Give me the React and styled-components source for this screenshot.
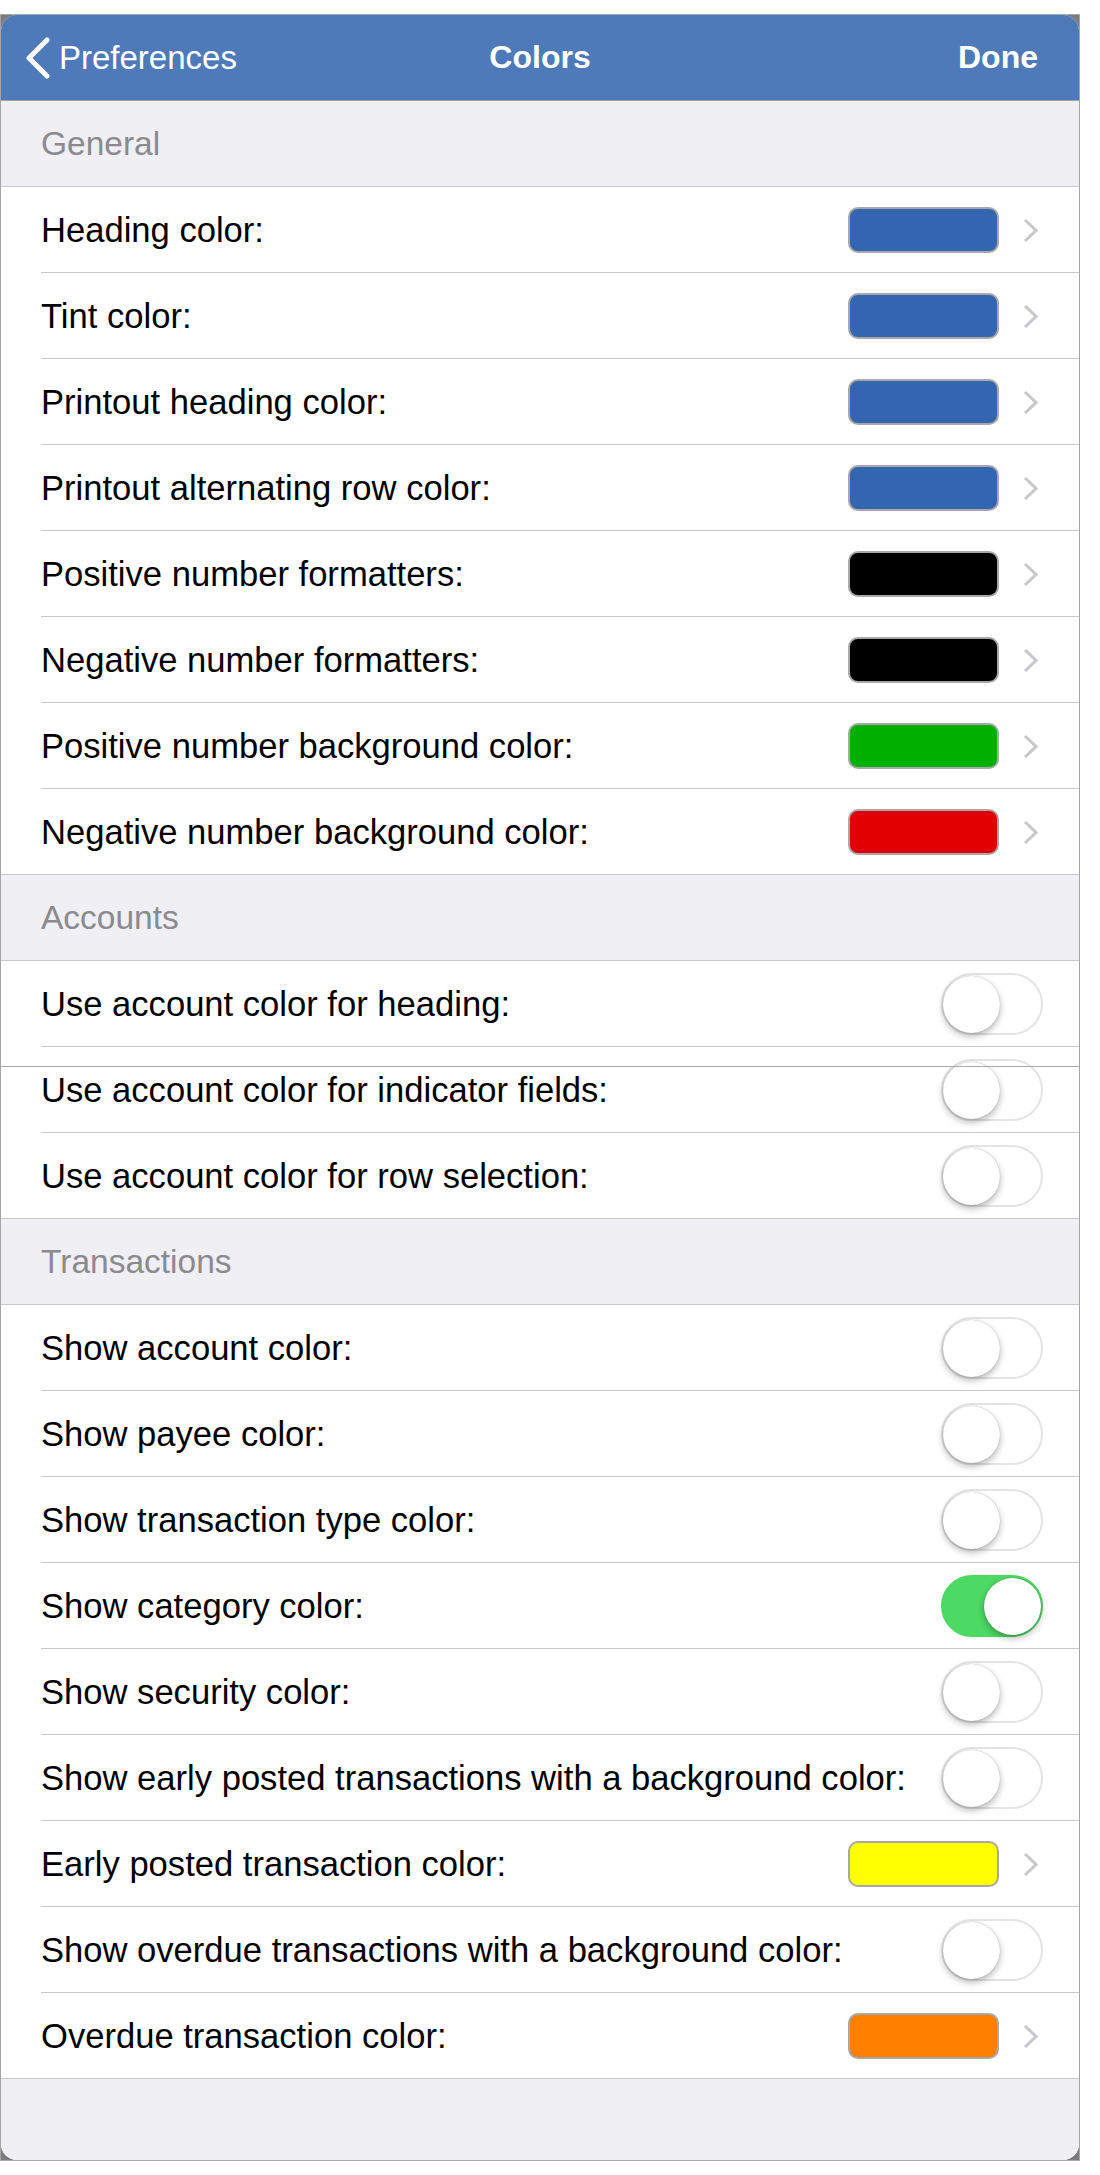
import styled, { createGlobalStyle } from "styled-components";

const GlobalStyle = createGlobalStyle`
  body {
    margin: 0;
    background: #ffffff;
    font-family: "Liberation Sans", Arial, sans-serif;
    -webkit-font-smoothing: antialiased;
  }
`;

const Page = styled.div`
  width: 1100px;
  padding-top: 14px;
`;

// the grey behind the rounded corners is part of the original capture
const Frame = styled.div`
  width: 1078px;
  border: 1px solid #a6a6a6;
  background: #7c7c7c;
`;

const Sheet = styled.div`
  background: #ffffff;
  border-radius: 16px;
  overflow: hidden;
`;

const NavBar = styled.header`
  display: grid;
  grid-template-columns: 1fr auto 1fr;
  align-items: center;
  height: 86px;
  box-sizing: border-box;
  background: #4e7ab9;
  border-bottom: 1px solid #a3a3a6;
  color: #ffffff;
  font-size: 33px;
`;

const BackButton = styled.div`
  display: flex;
  align-items: center;
  gap: 8px;
  padding-left: 24px;
`;

const Title = styled.div`
  font-weight: 700;
  font-size: 32px;
`;

const DoneButton = styled.div`
  justify-self: end;
  padding-right: 41px;
  font-weight: 700;
  font-size: 32px;
`;

const SectionHeader = styled.div`
  display: flex;
  align-items: center;
  height: 86px;
  box-sizing: border-box;
  padding-left: 40px;
  background: #efeff4;
  border-bottom: 1px solid #c8c7cc;
  color: #8a8a8f;
  font-size: 33.5px;
`;

const Row = styled.div`
  position: relative;
  display: flex;
  align-items: center;
  height: 86px;
  box-sizing: border-box;
  padding: 0 36px 0 40px;
  background: #ffffff;
  font-size: 34.6px;
  color: #000000;

  &::after {
    content: "";
    position: absolute;
    left: ${(p) => (p.$last ? "0" : "40px")};
    right: 0;
    bottom: 0;
    height: 1px;
    background: #c8c7cc;
  }

  ${(p) =>
    p.$glitch &&
    `
    &::before {
      content: "";
      position: absolute;
      left: 0;
      right: 0;
      top: 19px;
      height: 1px;
      background: #a9a9ac;
      z-index: 2;
    }
  `}
`;

const Label = styled.span`
  flex: 1;
  white-space: nowrap;
`;

const Swatch = styled.div`
  width: 151px;
  height: 46px;
  box-sizing: border-box;
  border: 2px solid #a8a8a8;
  border-radius: 10px;
  background: ${(p) => p.$color};
`;

const Chevron = styled.svg`
  margin-left: 24px;
  margin-right: 5px;
`;

const Track = styled.div`
  display: flex;
  align-items: center;
  justify-content: ${(p) => (p.$on ? "flex-end" : "flex-start")};
  width: 102px;
  height: 62px;
  box-sizing: border-box;
  border: 2.5px solid ${(p) => (p.$on ? "#4cd964" : "#e4e4e7")};
  border-radius: 31px;
  background: ${(p) => (p.$on ? "#4cd964" : "#ffffff")};
`;

const Knob = styled.div`
  width: 57px;
  height: 57px;
  border-radius: 50%;
  background: #ffffff;
  box-shadow: 0 3px 6px rgba(0, 0, 0, 0.22), 0 0 1px rgba(0, 0, 0, 0.35),
    0 4px 10px rgba(0, 0, 0, 0.08);
`;

const Footer = styled.div`
  height: 81px;
  background: #efeff4;
`;

function ColorRow({ label, color, last }) {
  return (
    <Row $last={last}>
      <Label>{label}</Label>
      <Swatch $color={color} />
      <Chevron width="15" height="25" viewBox="0 0 15 25">
        <polyline
          points="2,2 13,12.5 2,23"
          fill="none"
          stroke="#c7c7cc"
          strokeWidth="3"
        />
      </Chevron>
    </Row>
  );
}

function SwitchRow({ label, on, last, glitch }) {
  return (
    <Row $last={last} $glitch={glitch}>
      <Label>{label}</Label>
      <Track $on={on}>
        <Knob />
      </Track>
    </Row>
  );
}

const BLUE = "#3465b0";

export default function App() {
  return (
    <Page>
      <GlobalStyle />
      <Frame>
        <Sheet>
          <NavBar>
            <BackButton>
              <svg width="26" height="42" viewBox="0 0 26 42">
                <polyline
                  points="22,3 4,21 22,39"
                  fill="none"
                  stroke="#ffffff"
                  strokeWidth="5"
                  strokeLinecap="round"
                  strokeLinejoin="round"
                />
              </svg>
              <span>Preferences</span>
            </BackButton>
            <Title>Colors</Title>
            <DoneButton>Done</DoneButton>
          </NavBar>

          <SectionHeader>General</SectionHeader>
          <ColorRow label="Heading color:" color={BLUE} />
          <ColorRow label="Tint color:" color={BLUE} />
          <ColorRow label="Printout heading color:" color={BLUE} />
          <ColorRow label="Printout alternating row color:" color={BLUE} />
          <ColorRow label="Positive number formatters:" color="#000000" />
          <ColorRow label="Negative number formatters:" color="#000000" />
          <ColorRow label="Positive number background color:" color="#00b000" />
          <ColorRow
            label="Negative number background color:"
            color="#e00000"
            last
          />

          <SectionHeader>Accounts</SectionHeader>
          <SwitchRow label="Use account color for heading:" />
          <SwitchRow label="Use account color for indicator fields:" glitch />
          <SwitchRow label="Use account color for row selection:" last />

          <SectionHeader>Transactions</SectionHeader>
          <SwitchRow label="Show account color:" />
          <SwitchRow label="Show payee color:" />
          <SwitchRow label="Show transaction type color:" />
          <SwitchRow label="Show category color:" on />
          <SwitchRow label="Show security color:" />
          <SwitchRow label="Show early posted transactions with a background color:" />
          <ColorRow label="Early posted transaction color:" color="#ffff00" />
          <SwitchRow label="Show overdue transactions with a background color:" />
          <ColorRow label="Overdue transaction color:" color="#ff8000" last />

          <Footer />
        </Sheet>
      </Frame>
    </Page>
  );
}
